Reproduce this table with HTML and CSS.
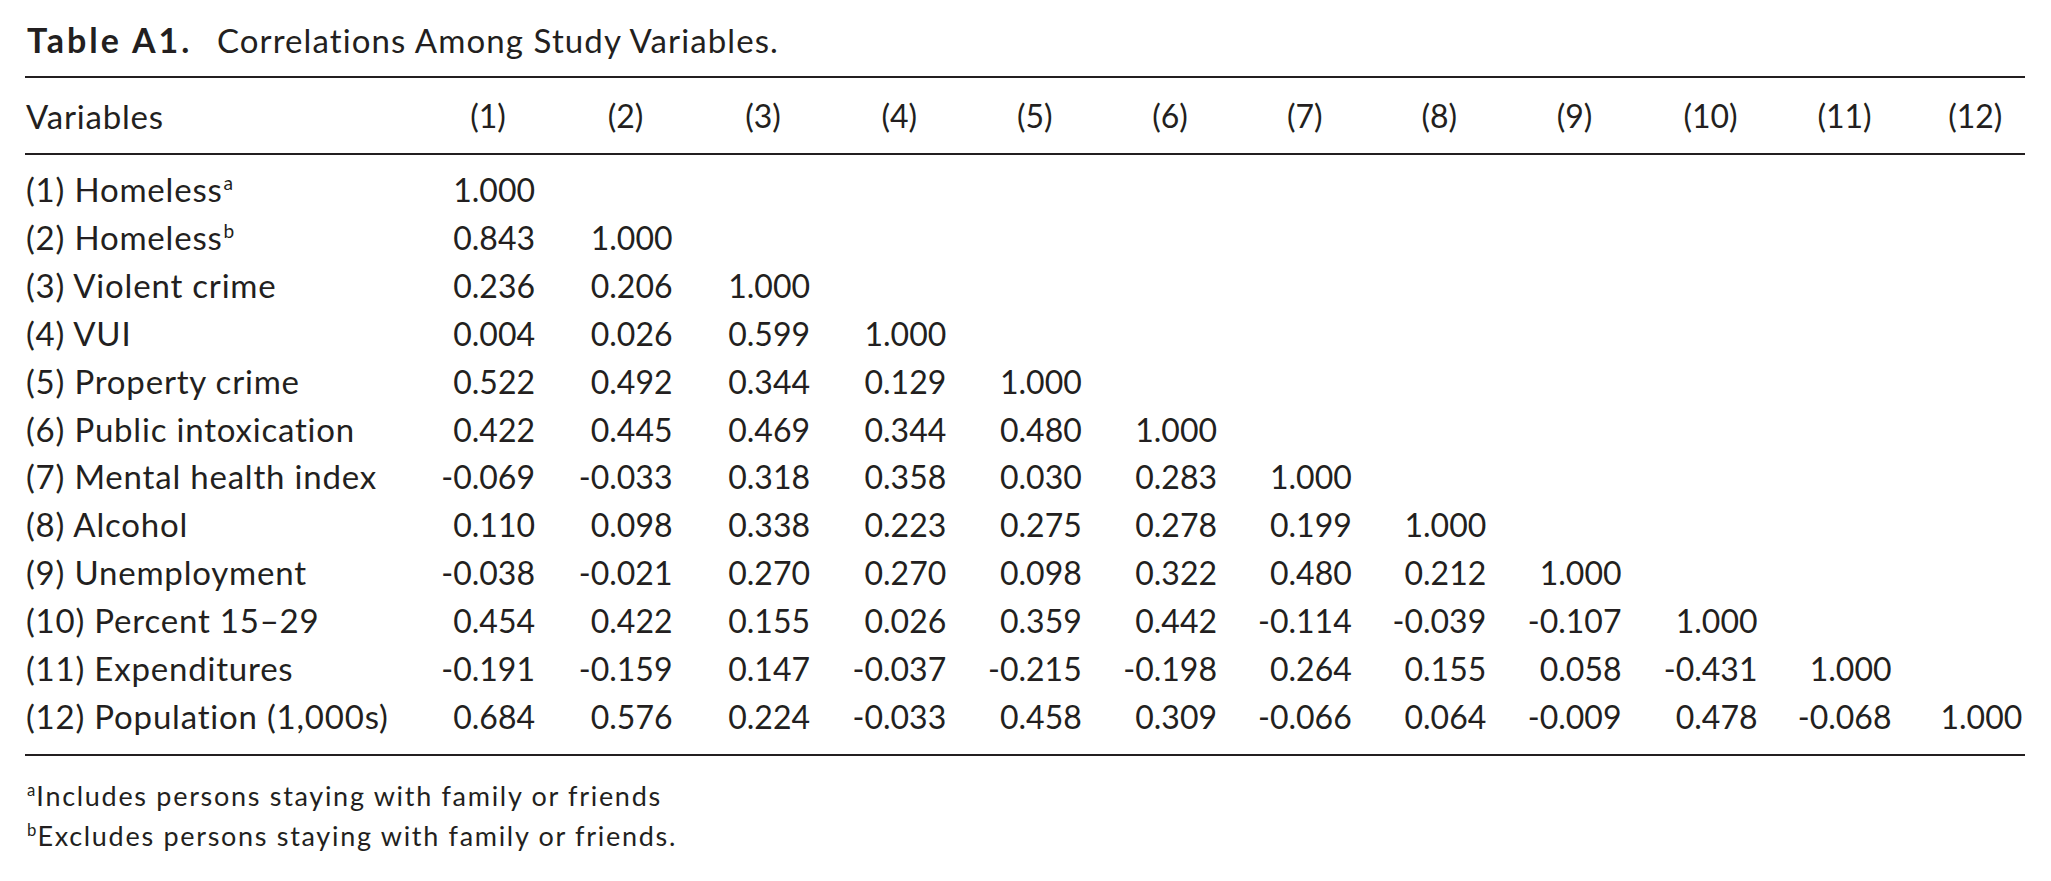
FILE: index.html
```html
<!DOCTYPE html>
<html lang="en">
<head>
<meta charset="utf-8">
<title>Table A1. Correlations Among Study Variables.</title>
<link rel="stylesheet" href="styles.css">
</head>
<body>
<div class="page">
  <div class="title"><span class="label">Table A1.</span> Correlations Among Study Variables.</div>
  <table class="corr">
    <colgroup>
      <col class="c-var">
      <col style="width:137px"><col style="width:138px"><col style="width:137px"><col style="width:135.5px">
      <col style="width:135.5px"><col style="width:135px"><col style="width:134.5px"><col style="width:134.5px">
      <col style="width:136px"><col style="width:136px"><col style="width:132px"><col style="width:114.5px">
    </colgroup>
    <thead>
      <tr>
        <th class="var">Variables</th>
        <th>(1)</th><th>(2)</th><th>(3)</th><th>(4)</th><th>(5)</th><th>(6)</th>
        <th>(7)</th><th>(8)</th><th>(9)</th><th>(10)</th><th>(11)</th><th class="last"><span class="shift">(12)</span></th>
      </tr>
    </thead>
    <tbody>
      <tr><td class="var">(1) Homeless<sup>a</sup></td><td><span class="n">1.000</span></td><td></td><td></td><td></td><td></td><td></td><td></td><td></td><td></td><td></td><td></td><td></td></tr>
      <tr><td class="var">(2) Homeless<sup>b</sup></td><td><span class="n">0.843</span></td><td><span class="n">1.000</span></td><td></td><td></td><td></td><td></td><td></td><td></td><td></td><td></td><td></td><td></td></tr>
      <tr><td class="var">(3) Violent crime</td><td><span class="n">0.236</span></td><td><span class="n">0.206</span></td><td><span class="n">1.000</span></td><td></td><td></td><td></td><td></td><td></td><td></td><td></td><td></td><td></td></tr>
      <tr><td class="var">(4) VUI</td><td><span class="n">0.004</span></td><td><span class="n">0.026</span></td><td><span class="n">0.599</span></td><td><span class="n">1.000</span></td><td></td><td></td><td></td><td></td><td></td><td></td><td></td><td></td></tr>
      <tr><td class="var">(5) Property crime</td><td><span class="n">0.522</span></td><td><span class="n">0.492</span></td><td><span class="n">0.344</span></td><td><span class="n">0.129</span></td><td><span class="n">1.000</span></td><td></td><td></td><td></td><td></td><td></td><td></td><td></td></tr>
      <tr><td class="var">(6) Public intoxication</td><td><span class="n">0.422</span></td><td><span class="n">0.445</span></td><td><span class="n">0.469</span></td><td><span class="n">0.344</span></td><td><span class="n">0.480</span></td><td><span class="n">1.000</span></td><td></td><td></td><td></td><td></td><td></td><td></td></tr>
      <tr><td class="var">(7) Mental health index</td><td><span class="n">-0.069</span></td><td><span class="n">-0.033</span></td><td><span class="n">0.318</span></td><td><span class="n">0.358</span></td><td><span class="n">0.030</span></td><td><span class="n">0.283</span></td><td><span class="n">1.000</span></td><td></td><td></td><td></td><td></td><td></td></tr>
      <tr><td class="var">(8) Alcohol</td><td><span class="n">0.110</span></td><td><span class="n">0.098</span></td><td><span class="n">0.338</span></td><td><span class="n">0.223</span></td><td><span class="n">0.275</span></td><td><span class="n">0.278</span></td><td><span class="n">0.199</span></td><td><span class="n">1.000</span></td><td></td><td></td><td></td><td></td></tr>
      <tr><td class="var">(9) Unemployment</td><td><span class="n">-0.038</span></td><td><span class="n">-0.021</span></td><td><span class="n">0.270</span></td><td><span class="n">0.270</span></td><td><span class="n">0.098</span></td><td><span class="n">0.322</span></td><td><span class="n">0.480</span></td><td><span class="n">0.212</span></td><td><span class="n">1.000</span></td><td></td><td></td><td></td></tr>
      <tr><td class="var">(10) Percent 15–29</td><td><span class="n">0.454</span></td><td><span class="n">0.422</span></td><td><span class="n">0.155</span></td><td><span class="n">0.026</span></td><td><span class="n">0.359</span></td><td><span class="n">0.442</span></td><td><span class="n">-0.114</span></td><td><span class="n">-0.039</span></td><td><span class="n">-0.107</span></td><td><span class="n">1.000</span></td><td></td><td></td></tr>
      <tr><td class="var">(11) Expenditures</td><td><span class="n">-0.191</span></td><td><span class="n">-0.159</span></td><td><span class="n">0.147</span></td><td><span class="n">-0.037</span></td><td><span class="n">-0.215</span></td><td><span class="n">-0.198</span></td><td><span class="n">0.264</span></td><td><span class="n">0.155</span></td><td><span class="n">0.058</span></td><td><span class="n">-0.431</span></td><td><span class="n">1.000</span></td><td></td></tr>
      <tr><td class="var">(12) Population (1,000s)</td><td><span class="n">0.684</span></td><td><span class="n">0.576</span></td><td><span class="n">0.224</span></td><td><span class="n">-0.033</span></td><td><span class="n">0.458</span></td><td><span class="n">0.309</span></td><td><span class="n">-0.066</span></td><td><span class="n">0.064</span></td><td><span class="n">-0.009</span></td><td><span class="n">0.478</span></td><td><span class="n">-0.068</span></td><td class="last"><span class="n shift">1.000</span></td></tr>
    </tbody>
  </table>
  <div class="notes">
    <p><sup>a</sup>Includes persons staying with family or friends</p>
    <p><sup>b</sup>Excludes persons staying with family or friends.</p>
  </div>
</div>
</body>
</html>
```

FILE: styles.css
```css
html, body {
  margin: 0;
  padding: 0;
  background: #ffffff;
}

body {
  font-family: Lato, "Open Sans", "Noto Sans", sans-serif;
  color: #231f20;
}

.page {
  padding: 20px 26px 0 25px;
  width: 2000px;
}

.title {
  font-size: 33px;
  line-height: 40px;
  letter-spacing: 1.1px;
  margin: 0 0 16px 2px;
  white-space: nowrap;
}

.title .label {
  font-weight: 700;
  letter-spacing: 3px;
  font-size: 34px;
  margin-right: 15px;
}

.corr {
  width: 2000px;
  table-layout: fixed;
  border-collapse: collapse;
  border-top: 2px solid #231f20;
  border-bottom: 2px solid #231f20;
  font-size: 32px;
}

.corr .c-var {
  width: 394.5px;
}

.corr th,
.corr td {
  padding: 0;
  text-align: center;
  white-space: nowrap;
  font-weight: 400;
}

.corr th {
  line-height: 48px;
  padding: 13.5px 0;
  border-bottom: 2px solid #231f20;
}

.corr td {
  line-height: 47.9px;
}

.corr tbody tr:first-child td {
  padding-top: 11px;
}

.corr tbody tr:last-child td {
  padding-bottom: 13px;
}

.corr .var {
  text-align: left;
  padding-left: 1px;
  font-size: 33px;
  letter-spacing: 0.8px;
}

.n {
  display: inline-block;
  width: 94px;
  text-align: right;
}

.shift {
  display: inline-block;
  margin-left: 15px;
}

sup {
  font-size: 0.58em;
  line-height: 0;
  vertical-align: 0.62em;
  margin-left: 1px;
  letter-spacing: 0;
}

.notes {
  margin-top: 20px;
  font-size: 27px;
  line-height: 40px;
  letter-spacing: 1.7px;
  padding-left: 2px;
}

.notes p {
  margin: 0;
}

.notes sup {
  font-size: 0.62em;
  vertical-align: 0.6em;
  margin-left: 0;
  margin-right: 1px;
}
```
